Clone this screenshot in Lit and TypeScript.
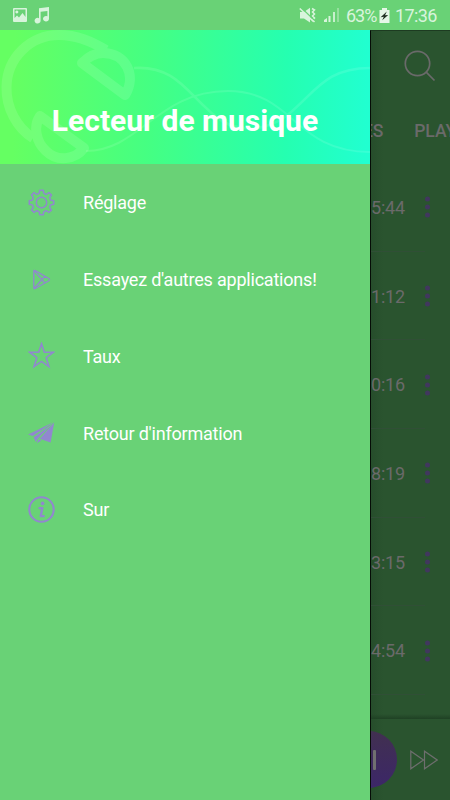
import { LitElement, html, svg, css } from "lit";
import { customElement } from "lit/decorators.js";

const gearPath = (() => {
  const pts: string[] = [];
  for (let i = 0; i < 8; i++) {
    const base = (i * Math.PI) / 4 - Math.PI / 2;
    for (const [r, a] of [[9.8, -0.22], [12.4, -0.15], [12.4, 0.15], [9.8, 0.22], [9.3, 0.39]]) {
      pts.push(`${(13.5 + r * Math.cos(base + a)).toFixed(2)} ${(13.5 + r * Math.sin(base + a)).toFixed(2)}`);
    }
  }
  return "M" + pts.join("L") + "Z";
})();

const icons = {
  gear: svg`<path d=${gearPath} stroke-width="1.5" stroke-linejoin="round"/><circle cx="13.5" cy="13.5" r="5.2" stroke-width="1.5"/>`,
  play: svg`<path d="M5.8 5.2V21.8Q6 23.2 7.2 22.5L20.8 14.7Q22.4 13.6 20.8 12.5L7.2 4.6Q5.8 4 5.8 5.2ZM6.3 4.9L16.8 17M6.3 22.3L16.8 10.2" stroke-width="1.3"/>`,
  star: svg`<path d="M13.5 1.8L16.3 10.2H25.3L18.2 15.7L20.9 24.6L13.5 19.4L6.1 24.6L8.8 15.7L1.7 10.2H10.7Z" stroke-width="1.6"/>`,
  plane: svg`<path d="M0 15.5L26 3L4.8 17.1ZM5.6 18.2L24.7 4.8L9.5 19.9L7.8 23.1ZM26.2 3.4L22.6 23.4L11.7 19.7ZM10.2 20.5L13.5 21.6L9 23.9Z" fill="currentColor" stroke="none"/>`,
  info: svg`<circle cx="13.5" cy="13.5" r="12.2" stroke-width="2.1"/><circle cx="14.6" cy="7.4" r="1.8" fill="currentColor" stroke="none"/><path d="M11.5 12.2H14.3L12.7 20.2H15.7" stroke-width="2.3" stroke-linecap="round" stroke-linejoin="round"/>`,
};

const items = [
  { icon: icons.gear, label: "Réglage" },
  { icon: icons.play, label: "Essayez d'autres applications!" },
  { icon: icons.star, label: "Taux" },
  { icon: icons.plane, label: "Retour d'information" },
  { icon: icons.info, label: "Sur" },
];

const durations = ["5:44", "1:12", "0:16", "8:19", "3:15", "4:54"];

@customElement("app-root")
export class AppRoot extends LitElement {
  static styles = css`
    :host { display: block; height: 100vh; overflow: hidden; background: #69d276; font-family: Roboto, sans-serif; }
    svg { display: block; flex: none; }
    .screen { display: flex; flex-direction: column; height: 100%; }
    .status { display: flex; align-items: center; height: 30px; padding: 0 13px 0 12px; box-sizing: border-box; color: #d8f4dc; font-size: 18px; }
    .left { display: flex; gap: 6px; flex: 1; align-items: center; }
    .signal { margin-left: 8px; }
    .battery { margin-left: 3px; }
    .percent { margin-left: 6px; width: 30px; display: block; white-space: nowrap; letter-spacing: -1px; line-height: 30px; padding-top: 1px; }
    .clock { margin-left: 5px; line-height: 30px; width: 42px; letter-spacing: -.6px; white-space: nowrap; padding-top: 1px; }
    .body { display: flex; flex: 1; min-height: 0; }
    .drawer { width: 370px; flex: none; background: #69d276; }
    .header { display: grid; height: 134px; background: linear-gradient(91deg, #65ff62 4%, #45ff82 40%, #25ffb0 77%, #21ffd0 99%); }
    .header > * { grid-area: 1 / 1; }
    h1 { margin: 0; align-self: end; justify-self: center; color: #fff; font-size: 30px; line-height: 36px; font-weight: 700; padding-bottom: 25px; white-space: nowrap; }
    .item { display: flex; align-items: center; height: 76.7px; padding-left: 28px; gap: 28px; color: #fff; font-size: 18px; letter-spacing: -.21px; white-space: nowrap; }
    .item span { padding-top: 1.3px; }
    .item svg { color: #9187cf; fill: none; stroke: currentColor; }
    .main { flex: 1; min-width: 0; box-sizing: border-box; display: flex; flex-direction: column; background: linear-gradient(90deg, #264d2b, #2a542f 12px); border-left: 1px solid #050c06; border-top: 1px solid #1d3b21; overflow: hidden; color: #6a6a6a; }
    .toolbar { height: 69px; display: flex; align-items: center; justify-content: flex-end; padding-right: 14px; }
    .tabs { height: 61px; padding-bottom: 2px; display: flex; align-items: center; justify-content: space-between; margin: 0 -6px 0 -8px; font-size: 17.5px; font-weight: 500; letter-spacing: -.1px; white-space: nowrap; }
    .row { display: flex; height: 88.7px; flex: none; align-items: center; justify-content: space-between; padding-right: 20px; font-size: 18px; letter-spacing: -.2px; box-sizing: border-box; background: linear-gradient(#304f36, #304f36) 0 100% / 54px 1px no-repeat; }
    .menu { display: block; }
    .menu svg { fill: #41375e; }
    .gap { flex: 1; background: linear-gradient(transparent 19px, #1f4124); }
    .player { height: 81px; flex: none; display: flex; align-items: center; justify-content: space-between; padding-right: 12px; }
    .pause { width: 57px; height: 57px; margin-left: -31px; border-radius: 50%; background: linear-gradient(#413050, #3c2768); display: flex; align-items: center; justify-content: center; gap: 9px; }
    .pause i { width: 3px; height: 20px; border-radius: 1px; background: #707070; }
  `;

  render() {
    return html`
      <div class="screen">
        <div class="status">
          <div class="left">
            <svg width="16" height="16" viewBox="0 0 16 16"><path fill="currentColor" fill-rule="evenodd" d="M1.5 1H14Q15 1 15 2V14Q15 15 14 15H2Q1 15 1 14V2Q1 1 2 1ZM2.5 2.5V11L5 8.5L7 10.5L10.5 6L13.5 10V2.5ZM4.9 3.5A1.5 1.5 0 1 1 4.8 3.5Z"/></svg>
            <svg width="16" height="18" viewBox="0 0 16 18"><path fill="currentColor" d="M5 2.2L15 1V12.5A3 2.8 0 1 1 13.4 10.3V5L6.6 5.8V14.6A3 2.8 0 1 1 5 12.2Z"/></svg>
          </div>
          <svg width="17" height="17" viewBox="0 0 17 17"><path fill="currentColor" d="M1 5H5L11 .8V15.5L5 11.5H1Z"/><path d="M13 1.5L15.5 3L13.5 5L15.5 7L13.5 9L15.5 11L13.5 13L15.5 15" fill="none" stroke="currentColor" stroke-width="1.5"/><path d="M2 .5L15 13" stroke="#69d276" stroke-width="1.3"/><path d="M.8 1.5L14.5 14.5" stroke="currentColor" stroke-width="1.6"/></svg>
          <svg class="signal" width="16" height="16" viewBox="0 0 16 16"><g fill="currentColor"><path d="M0 15V13L3 11V15Z"/><path d="M4.5 9H6.5V15H4.5Z"/><path opacity=".85" d="M9 5H11V15H9Z"/><path opacity=".4" d="M13 1H15V15H13Z"/></g></svg>
          <span class="percent">63%</span>
          <svg class="battery" width="11" height="17" viewBox="0 0 11 17"><path fill="#e5f7e7" d="M3 1H8V3H10.5V16H.5V3H3Z"/><path fill="#203023" d="M7.8 4.5L1.6 10.2L4.8 9.8L3.2 13.3L9.2 8L6 8.2Z"/></svg>
          <span class="clock">17:36</span>
        </div>
        <div class="body">
          <nav class="drawer">
            <div class="header">
              <svg width="370" height="134" viewBox="0 0 370 134" fill="none" stroke="#fff" stroke-linejoin="round">
                <g opacity=".11" stroke-width="10">
                  <path d="M33 108C17 98 6 78 6.5 57C7 28 30 5 59 5C77 5 91 11 106 20"/>
                  <path d="M82 33L125 65C137 46 126 23 103 23C94 23 88 27 82 33Z"/>
                  <path d="M40 86L84 118C75 130 57 132 46 121C36 112 33 96 40 86Z"/>
                </g>
                <g opacity=".1" stroke-width="2">
                  <path stroke-width="2.6" d="M134 38C180 35 190 70 222 91C250 107 277 94 290 83C317 60 327 38 370 38"/>
                  <path d="M86 121C140 121 157 61 228 61C294 61 294 122 370 122"/>
                </g>
              </svg>
              <h1>Lecteur de musique</h1>
            </div>
            ${items.map((it) => html`<div class="item"><svg width="27" height="27" viewBox="0 0 27 27">${it.icon}</svg><span>${it.label}</span></div>`)}
          </nav>
          <main class="main">
            <div class="toolbar">
              <svg width="32" height="32" viewBox="0 0 32 32" fill="none" stroke="#6a6a6a" stroke-width="1.7"><circle cx="13.5" cy="13.5" r="12.2"/><path d="M22.2 22.2L30.5 30.5"/></svg>
            </div>
            <div class="tabs"><span>ES</span><span>PLAY</span></div>
            ${durations.map((d) => html`<div class="row"><span>${d}</span><span class="menu"><svg width="5" height="22" viewBox="0 0 5 22"><circle cx="2.5" cy="3" r="2.5"/><circle cx="2.5" cy="11" r="2.5"/><circle cx="2.5" cy="19" r="2.5"/></svg></span></div>`)}
            <div class="gap"></div>
            <div class="player">
              <div class="pause"><i></i><i></i></div>
              <svg width="28" height="20" viewBox="0 0 28 20" fill="none" stroke="#6e6e6e" stroke-width="1.2"><path d="M.8 1.2V18.8L13.5 10ZM14.5 1.2V18.8L27.2 10Z"/></svg>
            </div>
          </main>
        </div>
      </div>`;
  }
}
